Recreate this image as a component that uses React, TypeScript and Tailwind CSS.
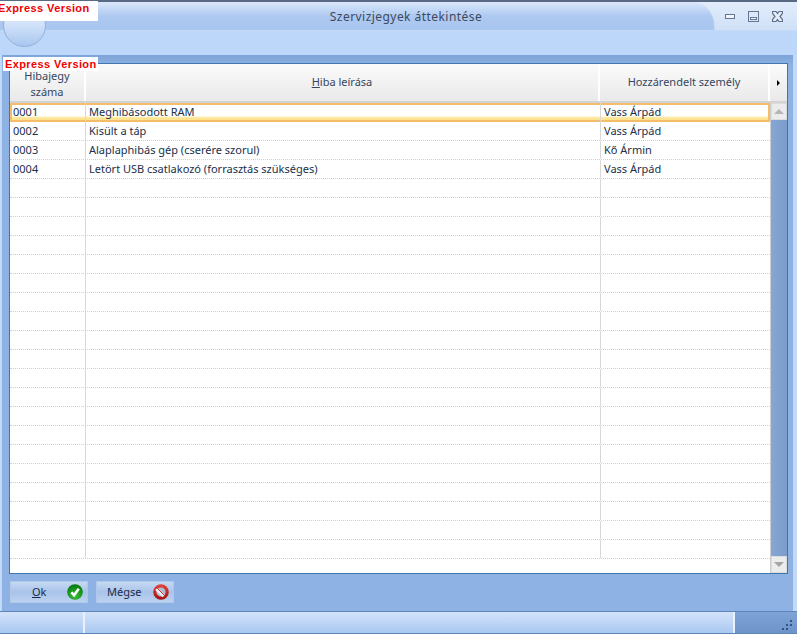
const rows = [
  { id: '0001', desc: 'Meghibásodott RAM', person: 'Vass Árpád' },
  { id: '0002', desc: 'Kisült a táp', person: 'Vass Árpád' },
  { id: '0003', desc: 'Alaplaphibás gép (cserére szorul)', person: 'Kő Ármin' },
  { id: '0004', desc: 'Letört USB csatlakozó (forrasztás szükséges)', person: 'Vass Árpád' },
];

const emptyRows = Array.from({ length: 20 }, (_, i) => i);

function Badge({ className }: { className: string }) {
  return (
    <div className={`absolute bg-white text-[#f00000] font-bold text-[11px] leading-[14px] tracking-[0.4px] font-['Liberation_Sans',sans-serif] whitespace-nowrap ${className}`}>
      Express Version
    </div>
  );
}

function OkIcon() {
  return (
    <svg width="16" height="16" viewBox="0 0 16 16">
      <defs>
        <radialGradient id="okFill" cx="50%" cy="75%" r="70%">
          <stop offset="0%" stopColor="#3cc13a" />
          <stop offset="100%" stopColor="#067a0e" />
        </radialGradient>
      </defs>
      <circle cx="8" cy="8" r="7.8" fill="url(#okFill)" />
      <path d="M4.3 8.4 7 11.2 11.8 4.8" fill="none" stroke="#fff" strokeWidth="2.6" />
    </svg>
  );
}

function CancelIcon() {
  return (
    <svg width="16" height="16" viewBox="0 0 16 16">
      <defs>
        <linearGradient id="cancelRing" x1="0" y1="0" x2="0" y2="1">
          <stop offset="0%" stopColor="#e0403a" />
          <stop offset="100%" stopColor="#a81412" />
        </linearGradient>
      </defs>
      <circle cx="8" cy="8" r="6.2" fill="#aebcd2" stroke="url(#cancelRing)" strokeWidth="3.2" />
      <path d="M3.4 4.8 10.8 12.2" stroke="#eef2f8" strokeWidth="3.2" />
      <path d="M3.2 3.2 12.8 12.8" stroke="#d02a26" strokeWidth="1" />
    </svg>
  );
}

function Button({ children, icon, className }: { children: React.ReactNode; icon: React.ReactNode; className: string }) {
  return (
    <button className={`w-[78px] h-[22px] flex items-center justify-between pr-[4px] border border-[#afc8ea] bg-gradient-to-b from-[#c6d9f3] via-[#a9c3e9] to-[#bcd2f0] text-[11px] text-[#1a2a44] ${className}`}>
      <span>{children}</span>
      {icon}
    </button>
  );
}

export default function App() {
  return (
    <div className="relative w-[797px] h-[634px] overflow-hidden flex flex-col bg-[#8db2e3] font-['Noto_Sans',sans-serif] text-[11px] text-[#20304a]">
      {/* title bar */}
      <div className="h-[31px] shrink-0 flex border-t-2 border-[#5a6a85] bg-gradient-to-b from-[#e2edfb] to-[#cfe0f7]">
        <div className="flex-1 rounded-tr-[24px] border-r border-b border-[#c6daf6] bg-gradient-to-b from-[#dbe8fb] via-[#aec9f1] via-50% to-[#a9c6ef] flex items-center justify-center pl-[98px] pt-[2px]">
          <span className="text-[12px] tracking-[0.45px] text-[#3b4a5e]">Szervizjegyek áttekintése</span>
        </div>
        <div className="w-[82px] border-b border-[#c6daf6] flex items-center pl-[10px] gap-[13px]">
          <svg width="10" height="5" viewBox="0 0 10 5">
            <rect x="0.5" y="0.5" width="9" height="4" fill="#f2f6fc" stroke="#667690" />
          </svg>
          <svg width="11" height="11" viewBox="0 0 11 11">
            <rect x="0.5" y="0.5" width="10" height="10" fill="#dce8f9" stroke="#667690" />
            <rect x="2.5" y="6.5" width="6" height="2" fill="#f2f6fc" stroke="#667690" />
          </svg>
          <svg width="11" height="11" viewBox="0 0 11 11">
            <path
              d="M0.5 0.5h3.5l1.5 2 1.5-2h3.5v2l-2.5 3 2.5 3v2h-3.5l-1.5-2-1.5 2h-3.5v-2l2.5-3-2.5-3z"
              fill="#e6edf8"
              stroke="#5f6f8a"
              strokeWidth="1.2"
            />
          </svg>
        </div>
      </div>

      {/* ribbon band */}
      <div className="h-[24px] shrink-0 bg-[#bdd7fb]" />

      {/* content */}
      <div className="flex-1 min-h-0 flex flex-col border-l-2 border-r-4 border-[#c2d9f7] pl-[7px] pr-[5px] pt-[8px] bg-gradient-to-b from-[#7ea4d8] from-0% via-[#8db2e3] via-[2%] to-[#8db2e3]">
        <div className="flex-1 min-h-0 flex flex-col border border-[#3e76ad] bg-white overflow-hidden">
          {/* header */}
          <div className="h-[39px] shrink-0 flex text-[#36465e] border-b-[2px] border-[#d3d3d3] bg-gradient-to-b from-[#fbfbfb] to-[#e9e9e9] text-center">
            <div className="w-[76px] flex items-center justify-center pt-[2px] leading-[16px] border-r-[2px] border-white">
              <span>
                Hibajegy
                <br />
                száma
              </span>
            </div>
            <div className="flex-1 flex items-center justify-center border-r-[2px] border-white">
              <span>
                <span className="underline">H</span>iba leírása
              </span>
            </div>
            <div className="w-[170px] flex items-center justify-center border-r-[2px] border-white">Hozzárendelt személy</div>
            <div className="w-[17px] flex items-center justify-center">
              <div className="w-0 h-0 border-y-[3px] border-y-transparent border-l-[3px] border-l-black" />
            </div>
          </div>

          <div className="flex-1 min-h-0 flex">
            {/* rows */}
            <div className="flex-1 min-w-0 flex flex-col overflow-hidden">
              {rows.map((r, i) => (
                <div
                  key={r.id}
                  className={`h-[19px] shrink-0 flex ${
                    i === 0
                      ? 'shadow-[inset_0_0_0_2px_#f3bd6b,inset_0_-5px_2px_#fde38e]'
                      : 'border-b border-dotted border-[#d0d0d0]'
                  }`}
                >
                  <div className="w-[76px] border-r border-[#d8d8d8] leading-[18px] pl-[3px]">{r.id}</div>
                  <div className="flex-1 border-r border-[#d8d8d8] leading-[18px] pl-[3px]">{r.desc}</div>
                  <div className="w-[169px] leading-[18px] pl-[3px]">{r.person}</div>
                </div>
              ))}
              {emptyRows.map((i) => (
                <div key={i} className="h-[19px] shrink-0 flex border-b border-dotted border-[#d0d0d0]">
                  <div className="w-[76px] border-r border-[#d8d8d8]" />
                  <div className="flex-1 border-r border-[#d8d8d8]" />
                  <div className="w-[169px]" />
                </div>
              ))}
            </div>
            {/* scrollbar */}
            <div className="w-[17px] shrink-0 flex flex-col border-l border-[#cfcfcf]">
              <div className="h-[17px] bg-[#ececec] border border-[#dcdcdc] flex items-center justify-center">
                <div className="w-0 h-0 border-x-[5px] border-x-transparent border-b-[5px] border-b-[#b5b5b5]" />
              </div>
              <div className="flex-1 bg-gradient-to-r from-[#86a7d4] to-[#7c9ccb]" />
              <div className="h-[17px] bg-[#ececec] border border-[#dcdcdc] flex items-center justify-center">
                <div className="w-0 h-0 border-x-[5px] border-x-transparent border-t-[5px] border-t-[#a5a5a5]" />
              </div>
            </div>
          </div>
        </div>

        {/* buttons */}
        <div className="h-[37px] shrink-0 flex items-start gap-[8px] pt-[7px] pl-[1px]">
          <Button className="pl-[21px]" icon={<OkIcon />}>
            <span className="underline">O</span>k
          </Button>
          <Button className="pl-[10px]" icon={<CancelIcon />}>Mégse</Button>
        </div>
      </div>

      {/* status bar */}
      <div className="h-[23px] shrink-0 flex border-y border-[#5d86b8] bg-gradient-to-b from-[#d3e3f9] to-[#a9c8f2]">
        <div className="w-[85px] border-r-2 border-[#e8f1fd]" />
        <div className="flex-1 border-r-2 border-[#e8f1fd]" />
        <div className="w-[62px] flex items-end justify-end bg-gradient-to-b from-[#7fa3d6] to-[#6d93ca] pr-[5px] pb-[3px]">
          <div className="grid grid-cols-3 gap-[2px]">
            {[0, 0, 1, 0, 1, 1, 1, 1, 0].map((on, i) => (
              <div key={i} className={`w-[2px] h-[2px] ${on ? 'bg-[#2f5587]' : ''}`} />
            ))}
          </div>
        </div>
      </div>

      {/* application orb, partly under the badge */}
      <div className="absolute left-[3px] top-[4px] w-[43px] h-[43px] rounded-full border border-[#8fb0dc] bg-gradient-to-b from-[#f0f6fe] via-[#cfe1f9] to-[#a9c7ef]" />

      <Badge className="left-0 top-[1px] w-[98px] h-[20px] indent-[-2px] overflow-hidden" />
      <Badge className="left-[3px] top-[57px] w-[95px] h-[14px] pl-[2px]" />
    </div>
  );
}
